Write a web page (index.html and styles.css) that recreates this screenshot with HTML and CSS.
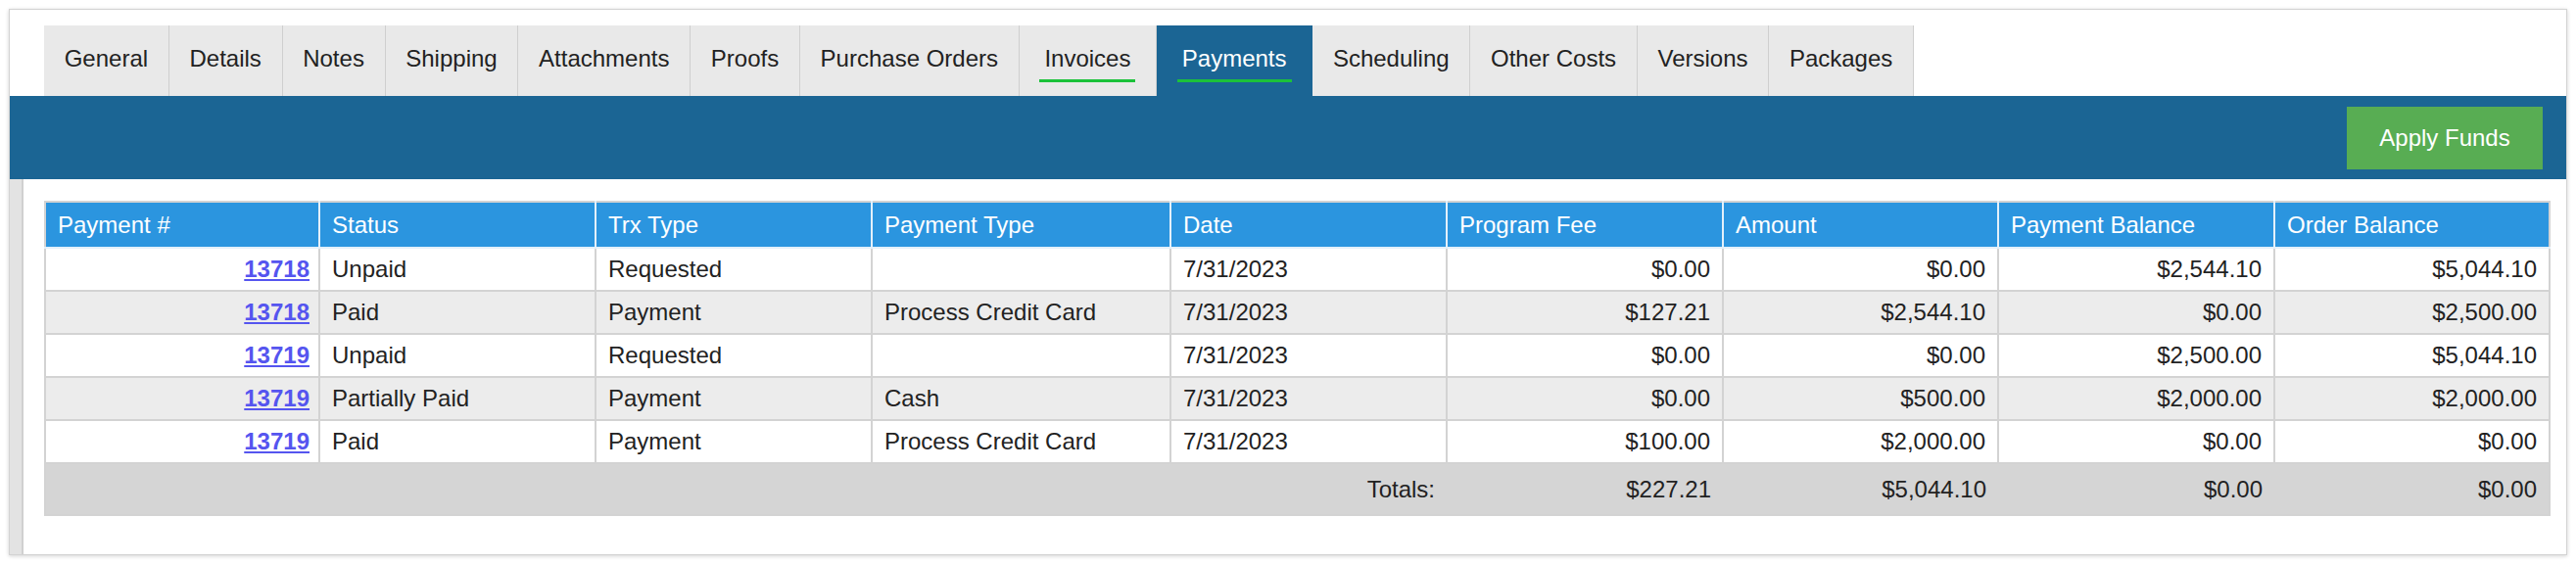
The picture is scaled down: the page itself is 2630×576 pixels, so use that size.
FILE: index.html
```html
<!DOCTYPE html>
<html lang="en">
<head>
  <meta charset="UTF-8">
  <meta name="viewport" content="width=device-width, initial-scale=1.0">
  <title>Payments</title>
  <link rel="stylesheet" href="styles.css">
</head>
<body>
  <div class="card">
    <nav class="tabs">
      <a class="tab"><span>General</span></a>
      <a class="tab"><span>Details</span></a>
      <a class="tab"><span>Notes</span></a>
      <a class="tab"><span>Shipping</span></a>
      <a class="tab"><span>Attachments</span></a>
      <a class="tab"><span>Proofs</span></a>
      <a class="tab"><span>Purchase Orders</span></a>
      <a class="tab marked"><span>Invoices</span></a>
      <a class="tab marked active"><span>Payments</span></a>
      <a class="tab"><span>Scheduling</span></a>
      <a class="tab"><span>Other Costs</span></a>
      <a class="tab"><span>Versions</span></a>
      <a class="tab"><span>Packages</span></a>
    </nav>
    <div class="toolbar">
      <button class="apply-btn">Apply Funds</button>
    </div>
    <div class="content">
      <div class="side"></div>
      <div class="main">
        <table class="payments">
          <colgroup>
            <col style="width:280px">
            <col style="width:282px">
            <col style="width:282px">
            <col style="width:305px">
            <col style="width:282px">
            <col style="width:282px">
            <col style="width:281px">
            <col style="width:282px">
            <col style="width:281px">
          </colgroup>
          <thead>
            <tr>
              <th>Payment #</th>
              <th>Status</th>
              <th>Trx Type</th>
              <th>Payment Type</th>
              <th>Date</th>
              <th>Program Fee</th>
              <th>Amount</th>
              <th>Payment Balance</th>
              <th>Order Balance</th>
            </tr>
          </thead>
          <tbody>
            <tr>
              <td class="num"><a href="#">13718</a></td>
              <td>Unpaid</td>
              <td>Requested</td>
              <td></td>
              <td>7/31/2023</td>
              <td class="num">$0.00</td>
              <td class="num">$0.00</td>
              <td class="num">$2,544.10</td>
              <td class="num">$5,044.10</td>
            </tr>
            <tr>
              <td class="num"><a href="#">13718</a></td>
              <td>Paid</td>
              <td>Payment</td>
              <td>Process Credit Card</td>
              <td>7/31/2023</td>
              <td class="num">$127.21</td>
              <td class="num">$2,544.10</td>
              <td class="num">$0.00</td>
              <td class="num">$2,500.00</td>
            </tr>
            <tr>
              <td class="num"><a href="#">13719</a></td>
              <td>Unpaid</td>
              <td>Requested</td>
              <td></td>
              <td>7/31/2023</td>
              <td class="num">$0.00</td>
              <td class="num">$0.00</td>
              <td class="num">$2,500.00</td>
              <td class="num">$5,044.10</td>
            </tr>
            <tr>
              <td class="num"><a href="#">13719</a></td>
              <td>Partially Paid</td>
              <td>Payment</td>
              <td>Cash</td>
              <td>7/31/2023</td>
              <td class="num">$0.00</td>
              <td class="num">$500.00</td>
              <td class="num">$2,000.00</td>
              <td class="num">$2,000.00</td>
            </tr>
            <tr>
              <td class="num"><a href="#">13719</a></td>
              <td>Paid</td>
              <td>Payment</td>
              <td>Process Credit Card</td>
              <td>7/31/2023</td>
              <td class="num">$100.00</td>
              <td class="num">$2,000.00</td>
              <td class="num">$0.00</td>
              <td class="num">$0.00</td>
            </tr>
          </tbody>
          <tfoot>
            <tr>
              <td class="num" colspan="5">Totals:</td>
              <td class="num">$227.21</td>
              <td class="num">$5,044.10</td>
              <td class="num">$0.00</td>
              <td class="num">$0.00</td>
            </tr>
          </tfoot>
        </table>
      </div>
    </div>
  </div>
</body>
</html>
```

FILE: styles.css
```css
body{
  margin: 0;
  background: #fff;
  font-family: "Liberation Sans", Arial, Helvetica, sans-serif;
  font-size: 24px;
  color: #222;
}
.card{
  margin: 9px;
  width: 2612px;
  box-sizing: border-box;
  border: 1px solid #d3d3d3;
  box-shadow: 0 1px 4px rgba(0,0,0,0.18);
  background: #fff;
}
.tabs{
  display: flex;
  padding: 16px 0 0 35px;
}
.tab{
  display: flex;
  align-items: flex-start;
  height: 72px;
  box-sizing: border-box;
  padding: 20px 20.7px 0;
  background: #e9e9e9;
  border-right: 1px solid #cfcfcf;
  color: #222;
  line-height: 28px;
  cursor: pointer;
}
.tab span{
  padding-bottom: 7px;
  border-bottom: 3px solid transparent;
}
.tab.marked span{
  padding: 0 5px 7px;
  border-bottom-color: #1cc23a;
}
.tab.active{
  background: #1b6594;
  border-right-color: #1b6594;
  color: #fff;
}
.toolbar{
  display: flex;
  justify-content: flex-end;
  align-items: center;
  height: 85px;
  padding-right: 24px;
  background: #1b6594;
}
.apply-btn{
  width: 200px;
  height: 64px;
  border: none;
  background: #58ad53;
  color: #fff;
  font-family: inherit;
  font-size: 24px;
  cursor: pointer;
}
.content{
  display: flex;
}
.side{
  width: 14px;
  background: #e3e3e3;
  border-right: 2px solid #d0d0d0;
}
.main{
  flex: 1;
  padding: 22px 16px 39px 21px;
}
.payments{
  width: 2557px;
  table-layout: fixed;
  border-collapse: collapse;
  border: 2px solid #d3d3d3;
}
.payments th{
  height: 45px;
  padding: 0 12px;
  background: #2b95df;
  color: #fff;
  font-weight: normal;
  text-align: left;
  border-left: 2px solid #e3f0fa;
  border-bottom: 2px solid #e3f0fa;
}
.payments th:first-child{
  border-left: none;
}
.payments td{
  height: 42px;
  padding: 0 12px;
  border: 2px solid #d3d3d3;
  white-space: nowrap;
}
.payments td:first-child{
  padding-right: 9px;
}
.payments tbody tr:nth-child(even) td{
  background: #ececec;
}
.payments .num{
  text-align: right;
}
.payments a{
  color: #5555ef;
  font-weight: bold;
}
.payments tfoot td{
  height: 51px;
  background: #d5d5d5;
  border-left: none;
  border-right: none;
}
.payments tfoot td:first-child{
  padding-right: 12px;
}
```
